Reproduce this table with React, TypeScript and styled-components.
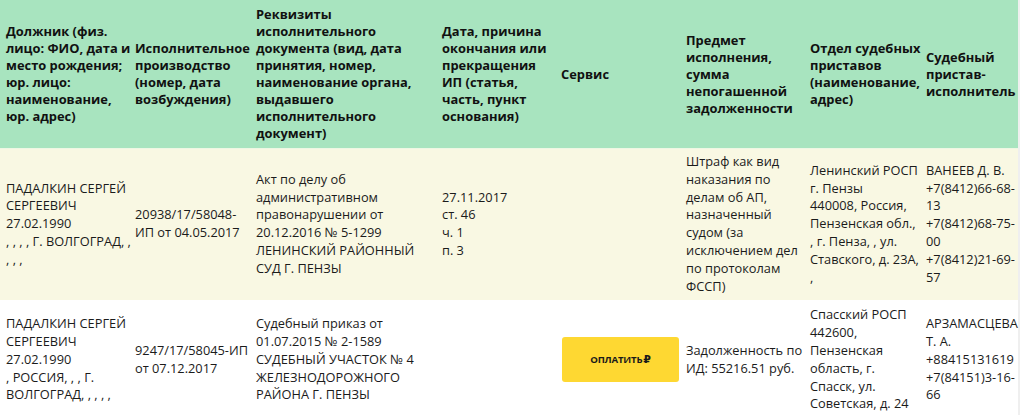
import React from "react";
import styled, { createGlobalStyle } from "styled-components";

const Global = createGlobalStyle`
  html, body { margin: 0; padding: 0; background: #efefef; }
  body { font-family: "Open Sans", "Noto Sans", sans-serif; color: #1b1b1b; }
`;

const Table = styled.table`
  width: 1018px;
  table-layout: fixed;
  border-collapse: collapse;
  border-spacing: 0;
`;

const HeadRow = styled.tr`
  background: #a8e4bf;
`;

const HeadCell = styled.th`
  font-weight: 700;
  font-size: 12.9px;
  line-height: 17px;
  color: #111;
  text-align: left;
  vertical-align: middle;
  padding: 6px 0 6px 6px;
  height: 136px;
  white-space: nowrap;
`;

const Row = styled.tr<{ $bg: string; $pad: number }>`
  background: ${(p) => p.$bg};
  border-top: 1px solid ${(p) => (p.$bg === "#f9f8e3" ? "#eef7e4" : "#f9f8e3")};

  & > td {
    padding-top: ${(p) => p.$pad}px;
    padding-bottom: ${(p) => p.$pad}px;
  }
`;

const Cell = styled.td`
  font-size: 12.8px;
  line-height: 17.8px;
  vertical-align: middle;
  padding-left: 6px;
  padding-right: 0;
  white-space: nowrap;
`;

const PayButton = styled.button`
  display: flex;
  align-items: center;
  justify-content: center;
  width: 117px;
  height: 45px;
  margin-left: 1px;
  border: none;
  border-radius: 3px;
  background: #fed832;
  color: #1a1a1a;
  font-family: "Open Sans", sans-serif;
  font-weight: 700;
  font-size: 9.6px;
  letter-spacing: -0.2px;
  cursor: pointer;
`;

const Rub = styled.span`
  font-family: "DejaVu Sans", sans-serif;
  font-weight: 700;
  font-size: 11px;
  margin-left: 1px;
`;

const cols = [129, 121, 186, 119, 125, 124, 116, 98];

const Lines = ({ lines }: { lines: string[] }) => (
  <>
    {lines.map((l, i) => (
      <React.Fragment key={i}>
        {l}
        {i < lines.length - 1 && <br />}
      </React.Fragment>
    ))}
  </>
);

export default function App() {
  return (
    <>
      <Global />
      <Table>
        <colgroup>
          {cols.map((w, i) => (
            <col key={i} style={{ width: w }} />
          ))}
        </colgroup>
        <thead>
          <HeadRow>
            <HeadCell>
              <Lines lines={["Должник (физ.", "лицо: ФИО, дата и", "место рождения;", "юр. лицо:", "наименование,", "юр. адрес)"]} />
            </HeadCell>
            <HeadCell>
              <Lines lines={["Исполнительное", "производство", "(номер, дата", "возбуждения)"]} />
            </HeadCell>
            <HeadCell>
              <Lines lines={["Реквизиты", "исполнительного", "документа (вид, дата", "принятия, номер,", "наименование органа,", "выдавшего", "исполнительного", "документ)"]} />
            </HeadCell>
            <HeadCell>
              <Lines lines={["Дата, причина", "окончания или", "прекращения", "ИП (статья,", "часть, пункт", "основания)"]} />
            </HeadCell>
            <HeadCell>Сервис</HeadCell>
            <HeadCell>
              <Lines lines={["Предмет", "исполнения,", "сумма", "непогашенной", "задолженности"]} />
            </HeadCell>
            <HeadCell>
              <Lines lines={["Отдел судебных", "приставов", "(наименование,", "адрес)"]} />
            </HeadCell>
            <HeadCell>
              <Lines lines={["Судебный", "пристав-", "исполнитель"]} />
            </HeadCell>
          </HeadRow>
        </thead>
        <tbody>
          <Row $bg="#f9f8e3" $pad={4}>
            <Cell>
              <Lines lines={["ПАДАЛКИН СЕРГЕЙ", "СЕРГЕЕВИЧ", "27.02.1990", ", , , , Г. ВОЛГОГРАД, ,", ", , ,"]} />
            </Cell>
            <Cell>
              <Lines lines={["20938/17/58048-", "ИП от 04.05.2017"]} />
            </Cell>
            <Cell>
              <Lines lines={["Акт по делу об", "административном", "правонарушении от", "20.12.2016 № 5-1299", "ЛЕНИНСКИЙ РАЙОННЫЙ", "СУД Г. ПЕНЗЫ"]} />
            </Cell>
            <Cell>
              <Lines lines={["27.11.2017", "ст. 46", "ч. 1", "п. 3"]} />
            </Cell>
            <Cell />
            <Cell>
              <Lines lines={["Штраф как вид", "наказания по", "делам об АП,", "назначенный", "судом (за", "исключением дел", "по протоколам", "ФССП)"]} />
            </Cell>
            <Cell>
              <Lines lines={["Ленинский РОСП", "г. Пензы", "440008, Россия,", "Пензенская обл.,", ", г. Пенза, , ул.", "Ставского, д. 23А,", ","]} />
            </Cell>
            <Cell>
              <Lines lines={["ВАНЕЕВ Д. В.", "+7(8412)66-68-", "13", "+7(8412)68-75-", "00", "+7(8412)21-69-", "57"]} />
            </Cell>
          </Row>
          <Row $bg="#ffffff" $pad={6}>
            <Cell>
              <Lines lines={["ПАДАЛКИН СЕРГЕЙ", "СЕРГЕЕВИЧ", "27.02.1990", ", РОССИЯ, , , Г.", "ВОЛГОГРАД, , , , ,"]} />
            </Cell>
            <Cell>
              <Lines lines={["9247/17/58045-ИП", "от 07.12.2017"]} />
            </Cell>
            <Cell>
              <Lines lines={["Судебный приказ от", "01.07.2015 № 2-1589", "СУДЕБНЫЙ УЧАСТОК № 4", "ЖЕЛЕЗНОДОРОЖНОГО", "РАЙОНА Г. ПЕНЗЫ"]} />
            </Cell>
            <Cell />
            <Cell>
              <PayButton>
                ОПЛАТИТЬ<Rub>₽</Rub>
              </PayButton>
            </Cell>
            <Cell>
              <Lines lines={["Задолженность по", "ИД: 55216.51 руб."]} />
            </Cell>
            <Cell>
              <Lines lines={["Спасский РОСП", "442600,", "Пензенская", "область, г.", "Спасск, ул.", "Советская, д. 24"]} />
            </Cell>
            <Cell>
              <Lines lines={["АРЗАМАСЦЕВА", "Т. А.", "+88415131619", "+7(84151)3-16-", "66"]} />
            </Cell>
          </Row>
        </tbody>
      </Table>
    </>
  );
}
